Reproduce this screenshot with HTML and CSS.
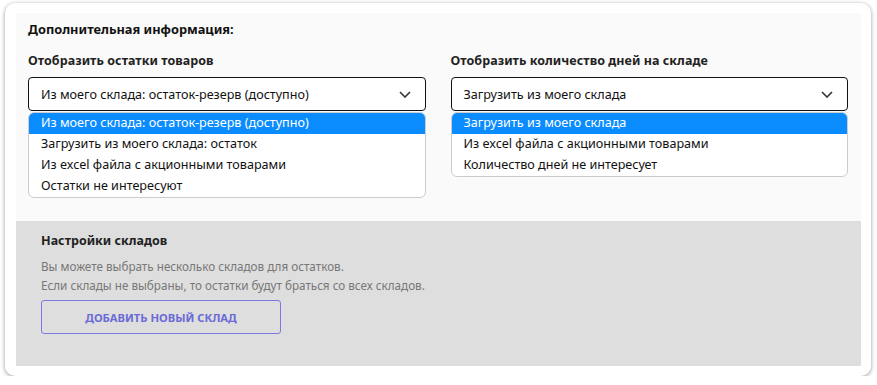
FILE: index.html
```html
<!DOCTYPE html>
<html lang="ru">
<head>
<meta charset="utf-8">
<link rel="stylesheet" href="styles.css">
</head>
<body>
<div class="card">
  <div class="inner">
    <section class="top">
      <h2 class="title">Дополнительная информация:</h2>
      <div class="cols">
        <div class="field">
          <div class="label">Отобразить остатки товаров</div>
          <div class="select">
            <span>Из моего склада: остаток-резерв (доступно)</span>
            <svg class="chev" width="12" height="7" viewBox="0 0 12 7"><path d="M1 1l5 5 5-5" fill="none" stroke="#333" stroke-width="1.6"/></svg>
          </div>
          <ul class="menu">
            <li class="active">Из моего склада: остаток-резерв (доступно)</li>
            <li>Загрузить из моего склада: остаток</li>
            <li>Из excel файла с акционными товарами</li>
            <li>Остатки не интересуют</li>
          </ul>
        </div>
        <div class="field">
          <div class="label">Отобразить количество дней на складе</div>
          <div class="select">
            <span>Загрузить из моего склада</span>
            <svg class="chev" width="12" height="7" viewBox="0 0 12 7"><path d="M1 1l5 5 5-5" fill="none" stroke="#333" stroke-width="1.6"/></svg>
          </div>
          <ul class="menu">
            <li class="active">Загрузить из моего склада</li>
            <li>Из excel файла с акционными товарами</li>
            <li>Количество дней не интересует</li>
          </ul>
        </div>
      </div>
    </section>
    <section class="stores">
      <h3 class="stores-title">Настройки складов</h3>
      <p class="hint">Вы можете выбрать несколько складов для остатков.</p>
      <p class="hint">Если склады не выбраны, то остатки будут браться со всех складов.</p>
      <button class="add-btn">ДОБАВИТЬ НОВЫЙ СКЛАД</button>
    </section>
  </div>
</div>
</body>
</html>
```
FILE: styles.css
```css
* { box-sizing: border-box; }
body {
  margin: 0;
  background: #fff;
  font-family: "Noto Sans", "Open Sans", sans-serif;
  color: #111;
}
.card {
  margin: 3px 0 0 5px;
  width: 866px;
  height: 373px;
  background: #fff;
  border-radius: 10px;
  box-shadow: 0 1px 4px rgba(0,0,0,0.4);
  padding: 10px 10px 10px 11px;
}
.inner {
  height: 353px;
  display: flex;
  flex-direction: column;
}
.top {
  background: #fafafa;
  height: 208px;
  padding: 8px 13px 0 12px;
}
.title {
  margin: 0;
  font-size: 12.8px;
  font-weight: 700;
  line-height: 16px;
}
.cols {
  display: flex;
  gap: 25px;
  margin-top: 16px;
}
.field {
  flex: 1;
  position: relative;
}
.label {
  font-size: 12.5px;
  font-weight: 700;
  line-height: 16px;
  letter-spacing: 0.05px;
  color: #222;
}
.select {
  margin-top: 8px;
  height: 34px;
  border: 1px solid #111;
  border-radius: 4px;
  background: #fff;
  display: flex;
  align-items: center;
  justify-content: space-between;
  padding: 0 14px 0 12px;
  font-size: 12.6px;
}
.menu {
  position: absolute;
  left: 0;
  right: 0;
  top: 59px;
  margin: 0;
  padding: 0;
  list-style: none;
  background: #fff;
  border: 1px solid #ccc;
  border-radius: 6px;
  overflow: hidden;
}
.menu li {
  height: 21px;
  line-height: 20px;
  padding-left: 12px;
  font-size: 12.6px;
  color: #111;
}
.menu li.active {
  background: #0a8cff;
  color: #fff;
}
.stores {
  flex: 1;
  background: #dedede;
  padding: 12px 25px 0 25px;
}
.stores-title {
  margin: 0 0 8px;
  font-size: 12.5px;
  font-weight: 700;
  line-height: 16px;
  color: #222;
}
.hint {
  margin: 0;
  font-size: 11.7px;
  line-height: 19px;
  color: #777;
}
.add-btn {
  margin-top: 5px;
  width: 240px;
  height: 34px;
  background: transparent;
  border: 1px solid #7a7ae0;
  border-radius: 3px;
  font-family: inherit;
  font-size: 11.2px;
  font-weight: 700;
  color: #6a6ad8;
}
```
